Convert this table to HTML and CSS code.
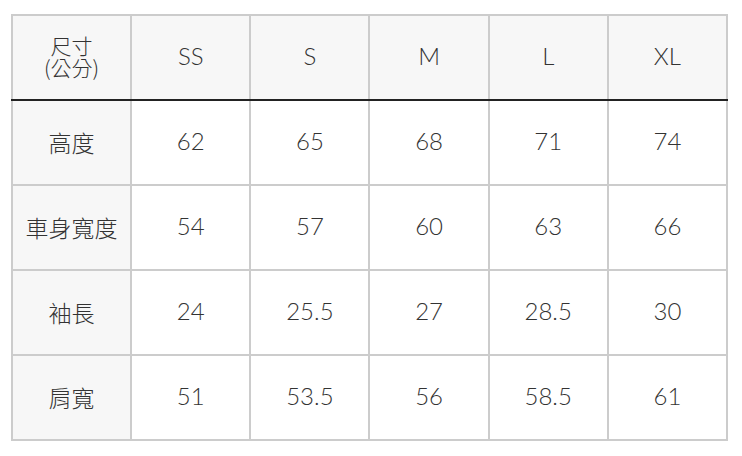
FILE: index.html
```html
<!DOCTYPE html>
<html lang="zh-Hant">
<head>
<meta charset="utf-8">
<link rel="stylesheet" href="styles.css">
</head>
<body>
<table class="size-table">
  <thead>
    <tr>
      <th class="label"><span class="label-small">尺寸<br>(公分)</span></th>
      <th>SS</th><th>S</th><th>M</th><th>L</th><th>XL</th>
    </tr>
  </thead>
  <tbody>
    <tr><th class="label">高度</th><td>62</td><td>65</td><td>68</td><td>71</td><td>74</td></tr>
    <tr><th class="label">車身寬度</th><td>54</td><td>57</td><td>60</td><td>63</td><td>66</td></tr>
    <tr><th class="label">袖長</th><td>24</td><td>25.5</td><td>27</td><td>28.5</td><td>30</td></tr>
    <tr><th class="label">肩寬</th><td>51</td><td>53.5</td><td>56</td><td>58.5</td><td>61</td></tr>
  </tbody>
</table>
</body>
</html>
```
FILE: styles.css
```css
html, body {
  margin: 0;
  background: #ffffff;
}
body {
  padding: 14px 0 0 11px;
  font-family: "Lato", "Noto Sans CJK TC", sans-serif;
  color: #333333;
}
.size-table {
  border-collapse: collapse;
  table-layout: fixed;
  width: 717px;
  border: 2px solid #cccccc;
}
.size-table th,
.size-table td {
  border: 2px solid #cccccc;
  height: 80px;
  padding: 0 0 3px;
  text-align: center;
  vertical-align: middle;
  font-weight: 300;
  font-size: 24px;
  line-height: 28px;
  color: #333333;
}
.size-table thead th {
  background: #f7f7f7;
  border-bottom: 2px solid #222222;
}
.size-table th.label {
  background: #f7f7f7;
  font-family: "Noto Sans CJK TC", sans-serif;
  font-size: 23px;
  font-weight: 300;
  padding-bottom: 2px;
}
.label-small {
  display: inline-block;
  font-size: 21px;
  line-height: 22px;
}
```
